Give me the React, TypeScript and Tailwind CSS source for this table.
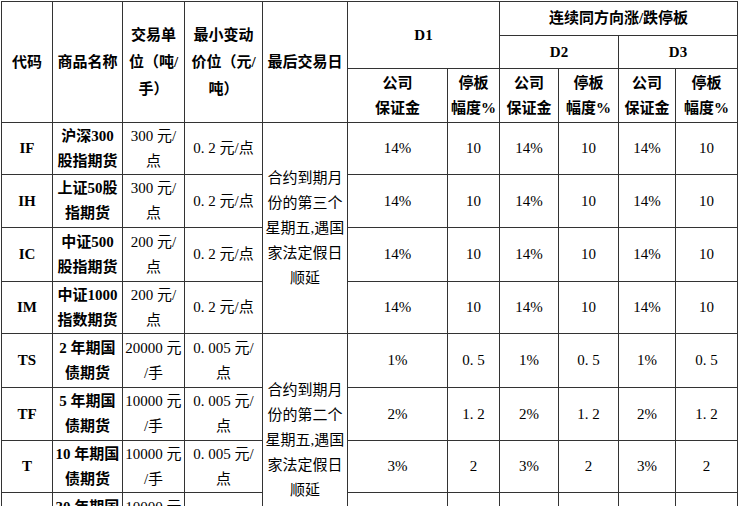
import React from "react";

const cols = [51, 70, 62, 78, 85, 100, 52, 59, 60, 57, 62];

const base =
  "border border-[#333] p-0 text-center align-middle text-[15px] text-black font-['Liberation_Serif','Noto_Sans_CJK_SC',serif]";
const hb = base + " font-bold";

function Lines({ lines, lh = "leading-[25px]" }: { lines: string[]; lh?: string }) {
  return (
    <div className={lh + " whitespace-nowrap"}>
      {lines.map((l, i) => (
        <div key={i}>{l}</div>
      ))}
    </div>
  );
}

type Row = {
  code: string;
  name: [string, string];
  unit: string[];
  tick: string[];
  m: string;
  s: string;
  h: string;
};

const rows: Row[] = [
  { code: "IF", name: ["沪深300", "股指期货"], unit: ["300 元/", "点"], tick: ["0. 2 元/点"], m: "14%", s: "10", h: "h-[52px]" },
  { code: "IH", name: ["上证50股", "指期货"], unit: ["300 元/", "点"], tick: ["0. 2 元/点"], m: "14%", s: "10", h: "h-[53px]" },
  { code: "IC", name: ["中证500", "股指期货"], unit: ["200 元/", "点"], tick: ["0. 2 元/点"], m: "14%", s: "10", h: "h-[54px]" },
  { code: "IM", name: ["中证1000", "指数期货"], unit: ["200 元/", "点"], tick: ["0. 2 元/点"], m: "14%", s: "10", h: "h-[52px]" },
  { code: "TS", name: ["2 年期国", "债期货"], unit: ["20000 元", "/手"], tick: ["0. 005 元/", "点"], m: "1%", s: "0. 5", h: "h-[54px]" },
  { code: "TF", name: ["5 年期国", "债期货"], unit: ["10000 元", "/手"], tick: ["0. 005 元/", "点"], m: "2%", s: "1. 2", h: "h-[53px]" },
  { code: "T", name: ["10 年期国", "债期货"], unit: ["10000 元", "/手"], tick: ["0. 005 元/", "点"], m: "3%", s: "2", h: "h-[52px]" },
  { code: "TL", name: ["30 年期国", "债期货"], unit: ["10000 元", "/手"], tick: ["0. 01 元/点"], m: "3.5%", s: "3. 5", h: "h-[54px]" },
];

export default function App() {
  return (
    <div className="w-[740px] h-[506px] overflow-hidden bg-white pl-[1px] pt-[1px]">
      <table className="table-fixed border-collapse w-[737px]">
        <colgroup>
          {cols.map((w, i) => (
            <col key={i} style={{ width: w }} />
          ))}
        </colgroup>
        <tbody>
          <tr className="h-[34px]">
            <td rowSpan={3} className={hb}>代码</td>
            <td rowSpan={3} className={hb}>商品名称</td>
            <td rowSpan={3} className={hb}>
              <Lines lh="leading-[27px]" lines={["交易单", "位（吨/", "手）"]} />
            </td>
            <td rowSpan={3} className={hb}>
              <Lines lh="leading-[27px]" lines={["最小变动", "价位（元/", "吨）"]} />
            </td>
            <td rowSpan={3} className={hb}>最后交易日</td>
            <td rowSpan={2} colSpan={2} className={hb}>D1</td>
            <td colSpan={4} className={hb}>连续同方向涨/跌停板</td>
          </tr>
          <tr className="h-[33px]">
            <td colSpan={2} className={hb}>D2</td>
            <td colSpan={2} className={hb}>D3</td>
          </tr>
          <tr className="h-[54px]">
            {[0, 1, 2].map((k) => (
              <React.Fragment key={k}>
                <td className={hb}>
                  <Lines lines={["公司", "保证金"]} />
                </td>
                <td className={hb}>
                  <Lines lines={["停板", "幅度%"]} />
                </td>
              </React.Fragment>
            ))}
          </tr>
          {rows.map((r, i) => (
            <tr key={r.code} className={r.h}>
              <td className={hb}>{r.code}</td>
              <td className={hb}>
                <Lines lines={r.name} />
              </td>
              <td className={base}>
                <Lines lines={r.unit} />
              </td>
              <td className={base}>
                <Lines lines={r.tick} />
              </td>
              {i === 0 && (
                <td rowSpan={4} className={base}>
                  <Lines lines={["合约到期月", "份的第三个", "星期五,遇国", "家法定假日", "顺延"]} />
                </td>
              )}
              {i === 4 && (
                <td rowSpan={4} className={base}>
                  <Lines lines={["合约到期月", "份的第二个", "星期五,遇国", "家法定假日", "顺延"]} />
                </td>
              )}
              {[0, 1, 2].map((k) => (
                <React.Fragment key={k}>
                  <td className={base}>{r.m}</td>
                  <td className={base}>{r.s}</td>
                </React.Fragment>
              ))}
            </tr>
          ))}
        </tbody>
      </table>
    </div>
  );
}
